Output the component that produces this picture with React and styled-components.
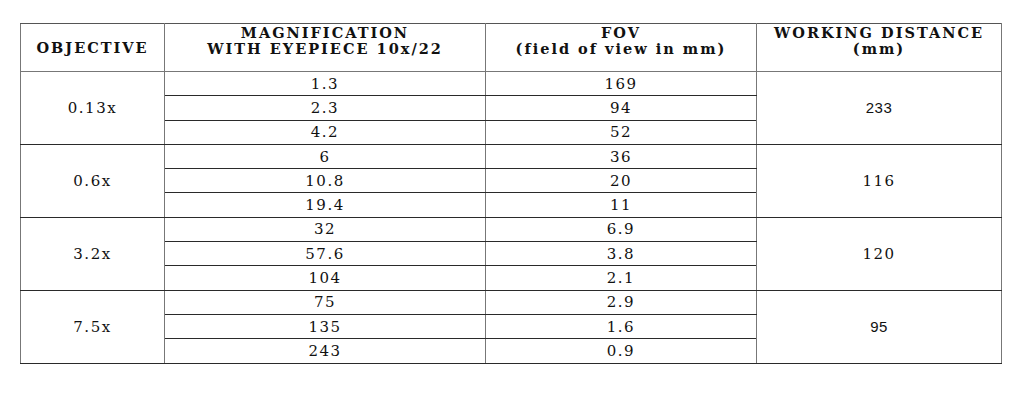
import React from "react";
import styled, { createGlobalStyle } from "styled-components";

const GlobalStyle = createGlobalStyle`
  html, body {
    margin: 0;
    padding: 0;
    background: #fff;
  }
`;

const Page = styled.div`
  padding: 23px 0 0 20px;
  font-family: "DejaVu Serif", "Liberation Serif", serif;
  color: #111;
`;

const Table = styled.table`
  border-collapse: collapse;
  table-layout: fixed;
  width: 981px;
`;

const Head = styled.th`
  box-sizing: border-box;
  width: ${(p) => p.w}px;
  height: 48px;
  padding: ${(p) => (p.single ? "0 2px" : "1px 2px 9px")};
  font-size: 14.5px;
  line-height: 15.5px;
  letter-spacing: 2px;
  font-weight: bold;
  text-align: center;
  white-space: nowrap;
  vertical-align: ${(p) => (p.single ? "middle" : "top")};
  border: 1px solid #777;
  border-top-color: #555;
`;

const Cell = styled.td`
  height: 23.3px;
  padding: 0;
  font-size: 15px;
  line-height: 20px;
  letter-spacing: ${(p) => (p.sans ? "0.5px" : "1.5px")};
  text-align: center;
  vertical-align: middle;
  border-top: 1px solid #2a2a2a;
  border-bottom: 1px solid #2a2a2a;
  border-left: 1px solid #777;
  border-right: 1px solid #777;
  font-family: ${(p) =>
    p.sans
      ? `"Liberation Sans", Arial, sans-serif`
      : `"DejaVu Serif", "Liberation Serif", serif`};
`;

const groups = [
  { obj: "0.13x", wd: "233", sans: true, rows: [["1.3", "169"], ["2.3", "94"], ["4.2", "52"]] },
  { obj: "0.6x", wd: "116", rows: [["6", "36"], ["10.8", "20"], ["19.4", "11"]] },
  { obj: "3.2x", wd: "120", rows: [["32", "6.9"], ["57.6", "3.8"], ["104", "2.1"]] },
  { obj: "7.5x", wd: "95", sans: true, rows: [["75", "2.9"], ["135", "1.6"], ["243", "0.9"]] },
];

export default function App() {
  return (
    <Page>
      <GlobalStyle />
      <Table>
        <thead>
          <tr>
            <Head w={144} single>OBJECTIVE</Head>
            <Head w={321}>
              MAGNIFICATION
              <br />
              WITH EYEPIECE 10x/22
            </Head>
            <Head w={271}>
              FOV
              <br />
              (field of view in mm)
            </Head>
            <Head w={245}>
              WORKING DISTANCE
              <br />
              (mm)
            </Head>
          </tr>
        </thead>
        <tbody>
          {groups.map((g) =>
            g.rows.map(([mag, fov], i) => (
              <tr key={g.obj + i}>
                {i === 0 && <Cell rowSpan={3}>{g.obj}</Cell>}
                <Cell>{mag}</Cell>
                <Cell>{fov}</Cell>
                {i === 0 && (
                  <Cell rowSpan={3} sans={g.sans}>
                    {g.wd}
                  </Cell>
                )}
              </tr>
            ))
          )}
        </tbody>
      </Table>
    </Page>
  );
}
